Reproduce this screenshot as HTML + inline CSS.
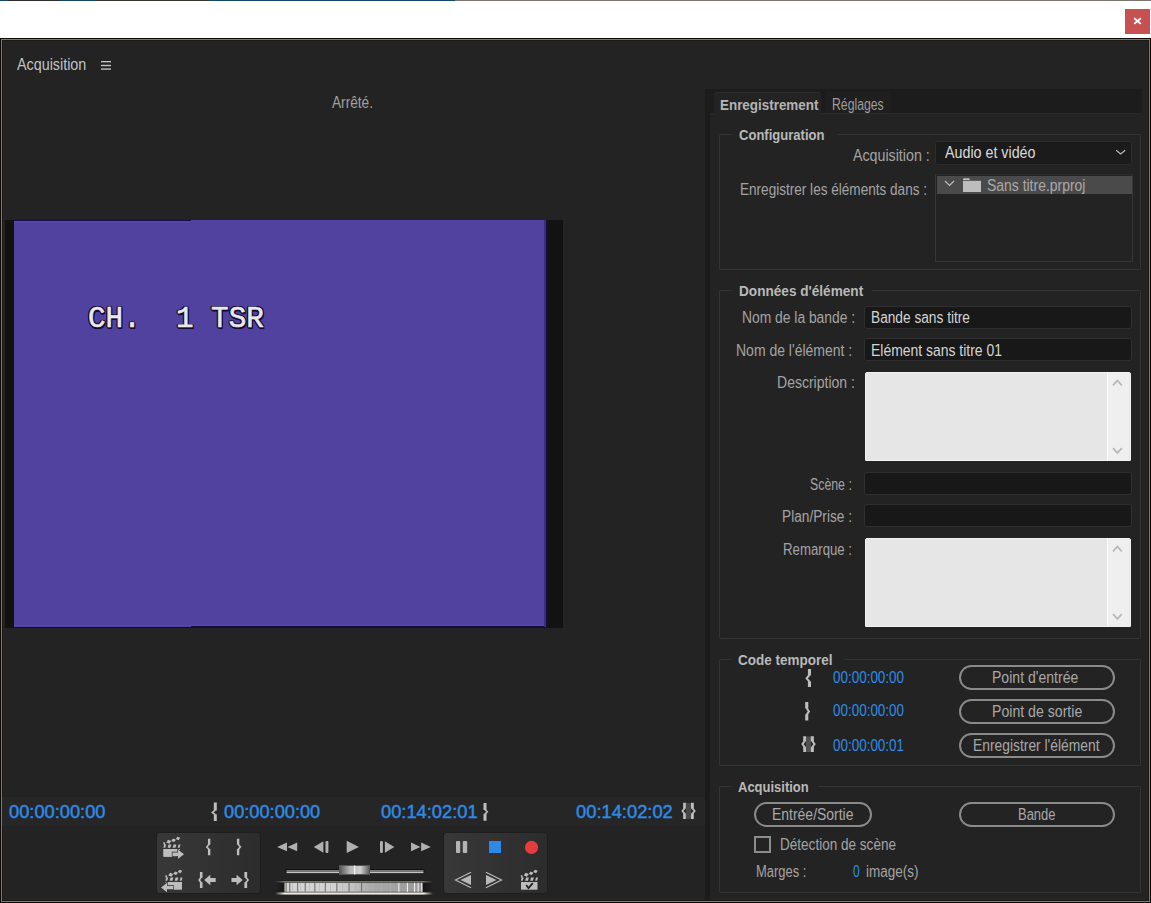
<!DOCTYPE html>
<html><head><meta charset="utf-8"><style>
html,body{margin:0;padding:0;width:1151px;height:903px;overflow:hidden;background:#fff;position:relative}
.b{position:absolute;display:block}
.t{position:absolute;white-space:nowrap;line-height:20px;font-family:"Liberation Sans",sans-serif;transform-origin:0 0}
</style></head><body>
<div class="b" style="left:0px;top:0px;width:455px;height:1px;background:#12486a"></div><div class="b" style="left:8px;top:0px;width:52px;height:1px;background:#2c2e2c"></div><div class="b" style="left:96px;top:0px;width:114px;height:1px;background:#383630"></div><div class="b" style="left:455px;top:0px;width:696px;height:1px;background:#7a746e"></div><div class="b" style="left:1125px;top:9px;width:25px;height:25px;background:#c75050"></div><svg class="b" style="left:1125px;top:9px" width="25" height="25"><path d="M9.2 9.3L15.8 14.9M15.8 9.3L9.2 14.9" stroke="#fff" stroke-width="1.9"/></svg><div class="b" style="left:0px;top:38px;width:1151px;height:865px;background:#0d0b08"></div><div class="b" style="left:1px;top:39px;width:1149px;height:863px;background:#2d8ae6"></div><div class="b" style="left:2px;top:40px;width:1147px;height:861px;background:#1e1b17"></div><div class="b" style="left:3px;top:41px;width:1145px;height:859px;background:#232323"></div><div class="t" style="left:17.20px;top:55px;font-size:16px;color:#c2c2c2;transform:scaleX(0.8953);">Acquisition</div><svg class="b" style="left:100px;top:58px" width="12" height="14"><rect x="1" y="3" width="10" height="1.35" fill="#c4c4c4"/><rect x="1" y="6.8" width="10" height="1.4" fill="#c4c4c4"/><rect x="1" y="10.2" width="10" height="1.8" fill="#9c9c9c"/></svg><div class="t" style="left:332.00px;top:93px;font-size:16px;color:#a0a0a0;transform:scaleX(0.8542);">Arrêté.</div><div class="b" style="left:5px;top:220px;width:558px;height:408px;background:#121210"></div><div class="b" style="left:14px;top:220px;width:530px;height:407px;background:#5242a0"></div><div class="b" style="left:14px;top:220px;width:177px;height:1px;background:#150a50"></div><div class="b" style="left:14px;top:221px;width:177px;height:1px;background:#5a4e96"></div><div class="b" style="left:14px;top:625px;width:177px;height:1px;background:#564e8e"></div><div class="b" style="left:191px;top:625px;width:353px;height:1px;background:#5c5a6a"></div><div class="b" style="left:191px;top:626px;width:353px;height:1px;background:#140c40"></div><div class="b" style="left:544px;top:220px;width:2px;height:407px;background:#3a2f7c"></div><div class="b" style="left:546px;top:220px;width:2px;height:407px;background:#160f3a"></div><div class="t" style="left:88px;top:305px;font-family:'Liberation Mono';font-size:29.3px;line-height:29px;color:#e8e8e8;-webkit-text-stroke:0.6px #e8e8e8;text-shadow:1.5px 0px 0 #120a34,-1.5px 0px 0 #120a34,0px 1.5px 0 #120a34,0px -1.5px 0 #120a34,1.2px 1.2px 0 #120a34,-1.2px -1.2px 0 #120a34,1.2px -1.2px 0 #120a34,-1.2px 1.2px 0 #120a34,1.5px 2px 0 #120a34,0px 2.2px 0 #120a34;transform:scaleX(1.0);transform-origin:0 0;white-space:pre">CH.  1 TSR</div><div class="b" style="left:2px;top:797px;width:703px;height:29px;background:#262626"></div><div class="t" style="left:8.60px;top:802px;font-size:18px;color:#2e8ce6;transform:scaleX(1.0147);-webkit-text-stroke:0.45px #2e8ce6;">00:00:00:00</div><div class="t" style="left:224.00px;top:802px;font-size:18px;color:#2e8ce6;transform:scaleX(1.0116);-webkit-text-stroke:0.45px #2e8ce6;">00:00:00:00</div><div class="t" style="left:381.30px;top:802px;font-size:18px;color:#2e8ce6;transform:scaleX(1.0158);-webkit-text-stroke:0.45px #2e8ce6;">00:14:02:01</div><div class="t" style="left:576.00px;top:802px;font-size:18px;color:#2e8ce6;transform:scaleX(1.0179);-webkit-text-stroke:0.45px #2e8ce6;">00:14:02:02</div><div class="b" style="left:705px;top:89px;width:437px;height:24px;background:#1c1c1c"></div><div class="b" style="left:709px;top:113px;width:5px;height:1px;background:#2a2a2a"></div><div class="b" style="left:821px;top:113px;width:320px;height:1px;background:#2a2a2a"></div><div class="b" style="left:705px;top:113px;width:5px;height:787px;background:#1c1c1c"></div><div class="b" style="left:714px;top:92px;width:107px;height:21px;background:#232323;border-radius:3px 3px 0 0;box-shadow:inset 0 1px 0 #2c2c2c"></div><div class="b" style="left:825px;top:92px;width:66px;height:21px;background:#1f1f1f;border-radius:3px 3px 0 0"></div><div class="t" style="left:719.60px;top:95px;font-size:15px;font-weight:bold;color:#b4b4b4;transform:scaleX(0.8941);">Enregistrement</div><div class="t" style="left:831.70px;top:95px;font-size:16px;color:#9c9c9c;transform:scaleX(0.7648);">Réglages</div><div class="b" style="left:719px;top:134px;width:422px;height:136px;border:1px solid #343434;border-radius:2px;box-sizing:border-box"></div><div class="b" style="left:732px;top:133px;width:105px;height:3px;background:#232323"></div><div class="t" style="left:738.60px;top:125px;font-size:15px;font-weight:bold;color:#b9b9b9;transform:scaleX(0.8698);">Configuration</div><div class="b" style="left:719px;top:290px;width:422px;height:349px;border:1px solid #343434;border-radius:2px;box-sizing:border-box"></div><div class="b" style="left:732px;top:289px;width:140px;height:3px;background:#232323"></div><div class="t" style="left:738.70px;top:281px;font-size:15px;font-weight:bold;color:#b9b9b9;transform:scaleX(0.9069);">Données d'élément</div><div class="b" style="left:719px;top:659px;width:422px;height:107px;border:1px solid #343434;border-radius:2px;box-sizing:border-box"></div><div class="b" style="left:732px;top:658px;width:112px;height:3px;background:#232323"></div><div class="t" style="left:738.40px;top:650px;font-size:15px;font-weight:bold;color:#b9b9b9;transform:scaleX(0.8990);">Code temporel</div><div class="b" style="left:719px;top:786px;width:422px;height:107px;border:1px solid #343434;border-radius:2px;box-sizing:border-box"></div><div class="b" style="left:732px;top:785px;width:86px;height:3px;background:#232323"></div><div class="t" style="left:738.40px;top:777px;font-size:15px;font-weight:bold;color:#b9b9b9;transform:scaleX(0.8659);">Acquisition</div><div class="t" style="left:853.30px;top:146px;font-size:16px;color:#a3a3a3;transform:scaleX(0.8893);">Acquisition :</div><div class="t" style="left:740.00px;top:180px;font-size:16px;color:#a3a3a3;transform:scaleX(0.8479);">Enregistrer les éléments dans :</div><div class="b" style="left:935px;top:141px;width:197px;height:24px;background:#1b1b1b;border:1px solid #2c2c2c;border-radius:3px;box-sizing:border-box"></div><div class="t" style="left:945.00px;top:143px;font-size:16px;color:#dadada;transform:scaleX(0.8925);">Audio et vidéo</div><svg class="b" style="left:1114px;top:148px" width="14" height="9"><path d="M2.2 2.2L6.6 6L11.2 2.2" stroke="#bcbcbc" stroke-width="1.15" fill="none"/></svg><div class="b" style="left:935px;top:174px;width:198px;height:88px;background:#232323;border:1px solid #363636;border-top-color:#2a2a2a;box-sizing:border-box"></div><div class="b" style="left:937px;top:176px;width:195px;height:18px;background:#4a4a4a"></div><svg class="b" style="left:943px;top:178px" width="14" height="10"><path d="M2 3L6.5 7.5L11 3" stroke="#bdbdbd" stroke-width="1.2" fill="none"/></svg><svg class="b" style="left:962px;top:177px" width="20" height="16"><rect x="1" y="3.8" width="18" height="11.2" fill="#bdbdbd"/><path d="M1 3V2.2Q1 1.2 2 1.2H6.8Q7.8 1.2 7.8 2.2V3z" fill="#bdbdbd"/></svg><div class="t" style="left:987.00px;top:176px;font-size:16px;color:#a9a9a9;transform:scaleX(0.8712);">Sans titre.prproj</div><div class="t" style="left:741.50px;top:308px;font-size:16px;color:#a3a3a3;transform:scaleX(0.8650);">Nom de la bande :</div><div class="b" style="left:864px;top:306px;width:268px;height:23px;background:#181818;border:1px solid #2f2f2f;border-radius:3px;box-sizing:border-box"></div><div class="t" style="left:871.40px;top:308px;font-size:16px;color:#d4d4d4;transform:scaleX(0.8560);">Bande sans titre</div><div class="t" style="left:735.60px;top:341px;font-size:16px;color:#a3a3a3;transform:scaleX(0.8743);">Nom de l'élément :</div><div class="b" style="left:864px;top:338px;width:268px;height:23px;background:#181818;border:1px solid #2f2f2f;border-radius:3px;box-sizing:border-box"></div><div class="t" style="left:871.40px;top:341px;font-size:16px;color:#d4d4d4;transform:scaleX(0.8716);">Elément sans titre 01</div><div class="t" style="left:776.70px;top:373px;font-size:16px;color:#a3a3a3;transform:scaleX(0.8763);">Description :</div><div class="b" style="left:865px;top:372px;width:266px;height:89px;background:#e6e6e6;border:1px solid #f2f2f2;border-radius:2px 2px 1px 1px;box-sizing:border-box"></div><div class="b" style="left:1107px;top:372px;width:1px;height:89px;background:#fbfbfb"></div><div class="b" style="left:1108px;top:373px;width:21px;height:87px;background:#efefef"></div><div class="b" style="left:1129px;top:373px;width:1px;height:87px;background:#e7e7e7"></div><svg class="b" style="left:1105px;top:372px" width="26" height="89"><path d="M8 13.3L12.4 8.6L16.8 13.3" stroke="#b8b8b8" stroke-width="1.7" fill="none"/><path d="M8 76.1L12.4 80.9L16.8 76.1" stroke="#b8b8b8" stroke-width="1.7" fill="none"/></svg><div class="t" style="left:810.10px;top:475px;font-size:16px;color:#a3a3a3;transform:scaleX(0.7705);">Scène :</div><div class="b" style="left:864px;top:472px;width:268px;height:23px;background:#181818;border:1px solid #2f2f2f;border-radius:3px;box-sizing:border-box"></div><div class="t" style="left:781.60px;top:507px;font-size:16px;color:#a3a3a3;transform:scaleX(0.8557);">Plan/Prise :</div><div class="b" style="left:864px;top:504px;width:268px;height:23px;background:#181818;border:1px solid #2f2f2f;border-radius:3px;box-sizing:border-box"></div><div class="t" style="left:782.60px;top:540px;font-size:16px;color:#a3a3a3;transform:scaleX(0.8254);">Remarque :</div><div class="b" style="left:865px;top:538px;width:266px;height:89px;background:#e6e6e6;border:1px solid #f2f2f2;border-radius:2px 2px 1px 1px;box-sizing:border-box"></div><div class="b" style="left:1107px;top:538px;width:1px;height:89px;background:#fbfbfb"></div><div class="b" style="left:1108px;top:539px;width:21px;height:87px;background:#efefef"></div><div class="b" style="left:1129px;top:539px;width:1px;height:87px;background:#e7e7e7"></div><svg class="b" style="left:1105px;top:538px" width="26" height="89"><path d="M8 13.3L12.4 8.6L16.8 13.3" stroke="#b8b8b8" stroke-width="1.7" fill="none"/><path d="M8 76.1L12.4 80.9L16.8 76.1" stroke="#b8b8b8" stroke-width="1.7" fill="none"/></svg><div class="t" style="left:832.80px;top:668px;font-size:16px;color:#2e8ce6;transform:scaleX(0.8402);">00:00:00:00</div><div class="t" style="left:832.80px;top:701px;font-size:16px;color:#2e8ce6;transform:scaleX(0.8402);">00:00:00:00</div><div class="t" style="left:832.80px;top:735.5px;font-size:16px;color:#2e8ce6;transform:scaleX(0.8402);">00:00:00:01</div><div class="b" style="left:959px;top:665px;width:156px;height:25px;border:2px solid #8a8a8a;border-radius:13px;box-sizing:border-box"></div><div class="t" style="left:992.40px;top:667.5px;font-size:16px;color:#a8a8a8;transform:scaleX(0.8784);">Point d'entrée</div><div class="b" style="left:959px;top:699px;width:156px;height:25px;border:2px solid #8a8a8a;border-radius:13px;box-sizing:border-box"></div><div class="t" style="left:991.50px;top:701.5px;font-size:16px;color:#a8a8a8;transform:scaleX(0.8827);">Point de sortie</div><div class="b" style="left:959px;top:733px;width:156px;height:25px;border:2px solid #8a8a8a;border-radius:13px;box-sizing:border-box"></div><div class="t" style="left:972.90px;top:736px;font-size:16px;color:#a8a8a8;transform:scaleX(0.8650);">Enregistrer l'élément</div><div class="b" style="left:754px;top:802px;width:118px;height:25px;border:2px solid #8a8a8a;border-radius:13px;box-sizing:border-box"></div><div class="t" style="left:771.60px;top:805px;font-size:16px;color:#a8a8a8;transform:scaleX(0.8726);">Entrée/Sortie</div><div class="b" style="left:959px;top:802px;width:156px;height:25px;border:2px solid #8a8a8a;border-radius:13px;box-sizing:border-box"></div><div class="t" style="left:1017.60px;top:805px;font-size:16px;color:#a8a8a8;transform:scaleX(0.8108);">Bande</div><div class="b" style="left:754px;top:836px;width:17px;height:17px;border:2px solid #8c8c8c;box-sizing:border-box"></div><div class="t" style="left:780.40px;top:834.5px;font-size:16px;color:#a3a3a3;transform:scaleX(0.8467);">Détection de scène</div><div class="t" style="left:755.60px;top:862px;font-size:16px;color:#a3a3a3;transform:scaleX(0.8096);">Marges :</div><div class="t" style="left:852.50px;top:862px;font-size:16px;color:#2e8ce6;transform:scaleX(0.7528);">0</div><div class="t" style="left:866.40px;top:862px;font-size:16px;color:#a3a3a3;transform:scaleX(0.8450);">image(s)</div><div class="b" style="left:157px;top:833px;width:103px;height:60px;background:linear-gradient(90deg,#383838,#2c2c2c);border-radius:3px;box-shadow:0 0 0 1px #1e1e1e"></div><div class="b" style="left:444px;top:833px;width:103px;height:60px;background:linear-gradient(90deg,#383838,#2c2c2c);border-radius:3px;box-shadow:0 0 0 1px #1e1e1e"></div><svg class="b" style="left:0;top:0" width="1151" height="903" viewBox="0 0 1151 903"><polygon points="163.20,842.60 164.40,841.90 165.60,844.60 163.80,845.00" fill="#bdbdbd"/><polygon points="166.25,842.41 168.12,839.85 171.25,841.09 169.38,843.65" fill="#bdbdbd"/><polygon points="171.20,840.93 173.00,838.50 176.00,839.67 174.20,842.10" fill="#bdbdbd"/><polygon points="175.80,839.08 177.45,836.65 180.20,837.82 178.55,840.25" fill="#bdbdbd"/><polygon points="164.30,844.60 166.20,844.60 165.20,847.80 163.30,847.80" fill="#bdbdbd"/><polygon points="168.60,844.60 171.40,844.60 170.40,847.80 167.60,847.80" fill="#bdbdbd"/><polygon points="173.60,844.60 176.40,844.60 175.40,847.80 172.60,847.80" fill="#bdbdbd"/><polygon points="178.60,844.60 180.50,844.60 179.50,847.80 177.60,847.80" fill="#bdbdbd"/><rect x="163.5" y="849" width="16.5" height="7.7" fill="#bdbdbd"/><rect x="163.5" y="849" width="16.5" height="7.7" fill="#bdbdbd"/><path d="M172.5,852.5 H178 V849.5 L184,854.3 L178,859.0999999999999 V856.0999999999999 H172.5 Z" fill="#bdbdbd" stroke="#303030" stroke-width="1.3" paint-order="stroke"/><polygon points="165.20,875.60 166.40,874.90 167.60,877.60 165.80,878.00" fill="#bdbdbd"/><polygon points="168.25,875.41 170.12,872.85 173.25,874.09 171.38,876.65" fill="#bdbdbd"/><polygon points="173.20,873.93 175.00,871.50 178.00,872.67 176.20,875.10" fill="#bdbdbd"/><polygon points="177.80,872.08 179.45,869.65 182.20,870.82 180.55,873.25" fill="#bdbdbd"/><polygon points="166.30,877.60 168.20,877.60 167.20,880.80 165.30,880.80" fill="#bdbdbd"/><polygon points="170.60,877.60 173.40,877.60 172.40,880.80 169.60,880.80" fill="#bdbdbd"/><polygon points="175.60,877.60 178.40,877.60 177.40,880.80 174.60,880.80" fill="#bdbdbd"/><polygon points="180.60,877.60 182.50,877.60 181.50,880.80 179.60,880.80" fill="#bdbdbd"/><rect x="165.5" y="882" width="16.5" height="7.7" fill="#bdbdbd"/><path d="M173,885.7 H167 V882.7 L161,887.5 L167,892.3 V889.3 H173 Z" fill="#bdbdbd" stroke="#303030" stroke-width="1.3" paint-order="stroke"/><path d="M209.15,838.8 V844.70 M209.15,849.10 V855.2" stroke="#bdbdbd" stroke-width="2.4" fill="none"/><path d="M209.15,844.30 L206.77,846.90 L209.15,849.50" stroke="#bdbdbd" stroke-width="1.6" fill="none" stroke-linejoin="miter"/><path d="M238.10,838.8 V844.70 M238.10,849.10 V855.2" stroke="#bdbdbd" stroke-width="2.4" fill="none"/><path d="M238.10,844.30 L240.38,846.90 L238.10,849.50" stroke="#bdbdbd" stroke-width="1.6" fill="none" stroke-linejoin="miter"/><path d="M201.20,871.9 V877.70 M201.20,882.30 V888" stroke="#bdbdbd" stroke-width="2.6" fill="none"/><path d="M201.20,877.30 L199.19,880.00 L201.20,882.70" stroke="#bdbdbd" stroke-width="1.7" fill="none" stroke-linejoin="miter"/><path d="M215.7,878.05 H210.29999999999998 V874.85 L204.2,880 L210.29999999999998,885.15 V881.95 H215.7 Z" fill="#bdbdbd"/><path d="M245.75,871.9 V877.70 M245.75,882.30 V888" stroke="#bdbdbd" stroke-width="2.8" fill="none"/><path d="M245.75,877.30 L248.01,880.00 L245.75,882.70" stroke="#bdbdbd" stroke-width="1.7" fill="none" stroke-linejoin="miter"/><path d="M231.5,878.05 H236.6 V874.85 L242.7,880 L236.6,885.15 V881.95 H231.5 Z" fill="#bdbdbd"/><polygon points="277.1,847 287,842.6 287,851.3" fill="#b0b0b0"/><polygon points="287.5,847 297.2,842.6 297.2,851.3" fill="#b0b0b0"/><polygon points="313.8,847 323.4,841.3 323.4,852.8" fill="#b0b0b0"/><rect x="325.5" y="841" width="2.9" height="12" rx="1.2" fill="#b0b0b0"/><polygon points="346.7,840.8 358.9,847 346.7,853" fill="#b0b0b0"/><rect x="380" y="841" width="2.9" height="12" rx="1.2" fill="#b0b0b0"/><polygon points="384.9,841.2 394.3,847 384.9,852.8" fill="#b0b0b0"/><polygon points="411,842.6 420.5,847 411,851.3" fill="#b0b0b0"/><polygon points="421.1,842.6 430.8,847 421.1,851.3" fill="#b0b0b0"/><rect x="285.5" y="869" width="139" height="5" rx="2" fill="#111"/><rect x="286.5" y="870" width="137" height="1.8" fill="#7a7a7a"/><rect x="286.5" y="871.8" width="137" height="1.4" fill="#c4c4c4"/><defs><linearGradient id="th" x1="0" x2="1"><stop offset="0" stop-color="#5a5a5a"/><stop offset="0.35" stop-color="#b8b8b8"/><stop offset="0.7" stop-color="#d0d0d0"/><stop offset="1" stop-color="#606060"/></linearGradient><linearGradient id="jogfade" x1="0" x2="1"><stop offset="0" stop-color="#232323"/><stop offset="0.06" stop-color="#232323" stop-opacity="0"/><stop offset="0.94" stop-color="#232323" stop-opacity="0"/><stop offset="1" stop-color="#232323"/></linearGradient></defs><rect x="339" y="865" width="31" height="10" fill="#555"/><rect x="340" y="866" width="29" height="8" fill="url(#th)"/><rect x="354" y="865.5" width="1.2" height="9" fill="#f4f4f4"/><defs><linearGradient id="jogband" x1="0" x2="1"><stop offset="0" stop-color="#d6d6d6"/><stop offset="0.35" stop-color="#d2d2d2"/><stop offset="0.5" stop-color="#c2c2c2"/><stop offset="0.62" stop-color="#aaaaaa"/><stop offset="1" stop-color="#9a9a9a"/></linearGradient></defs><rect x="275" y="880.6" width="158" height="14.4" fill="#161616"/><rect x="275" y="881.2" width="158" height="1.2" fill="#8c887c"/><rect x="284.5" y="882.8" width="138" height="9" fill="url(#jogband)"/><rect x="285.6" y="882.8" width="1.1" height="9" fill="#707070"/><rect x="289.2" y="882.8" width="1.1" height="9" fill="#707070"/><rect x="297.1" y="882.8" width="1.1" height="9" fill="#707070"/><rect x="304.7" y="882.8" width="1.1" height="9" fill="#707070"/><rect x="314.3" y="882.8" width="1.1" height="9" fill="#707070"/><rect x="324.8" y="882.8" width="1.1" height="9" fill="#707070"/><rect x="336.3" y="882.8" width="1.1" height="9" fill="#707070"/><rect x="348.5" y="882.8" width="1.1" height="9" fill="#707070"/><rect x="361" y="882.8" width="1.1" height="9" fill="#707070"/><rect x="292" y="882.8" width="1" height="9" fill="#b0b0b0" opacity="0.6"/><rect x="300" y="882.8" width="1" height="9" fill="#b0b0b0" opacity="0.6"/><rect x="309" y="882.8" width="1" height="9" fill="#b0b0b0" opacity="0.6"/><rect x="319" y="882.8" width="1" height="9" fill="#b0b0b0" opacity="0.6"/><rect x="330" y="882.8" width="1" height="9" fill="#b0b0b0" opacity="0.6"/><rect x="342" y="882.8" width="1" height="9" fill="#b0b0b0" opacity="0.6"/><rect x="355" y="882.8" width="1" height="9" fill="#b0b0b0" opacity="0.6"/><rect x="372" y="882.8" width="1" height="9" fill="#b0b0b0" opacity="0.6"/><rect x="381" y="882.8" width="1" height="9" fill="#b0b0b0" opacity="0.6"/><rect x="390" y="882.8" width="1" height="9" fill="#b0b0b0" opacity="0.6"/><rect x="398.3" y="882.8" width="1.1" height="9" fill="#eeeeee"/><rect x="406.9" y="882.8" width="1.1" height="9" fill="#eeeeee"/><rect x="414" y="882.8" width="1.1" height="9" fill="#eeeeee"/><rect x="417.6" y="882.8" width="1.1" height="9" fill="#eeeeee"/><rect x="421.2" y="882.8" width="1.1" height="9" fill="#eeeeee"/><rect x="275" y="892.4" width="158" height="2.2" fill="#efebdf"/><rect x="275" y="880" width="158" height="15.5" fill="url(#jogfade)"/><rect x="456" y="841" width="4.2" height="12" rx="1" fill="#b4b4b4"/><rect x="462.8" y="841" width="4.4" height="12" rx="1" fill="#b4b4b4"/><rect x="489" y="841" width="12" height="12" fill="#2d88e8"/><circle cx="531.5" cy="847.4" r="6.6" fill="#e83c3c"/><polyline points="471,872.3 455.5,880 471,887.7" fill="none" stroke="#b8b8b8" stroke-width="1.2"/><polygon points="471,875 460.5,880 471,885" fill="#b8b8b8"/><polyline points="486,872.3 501.5,880 486,887.7" fill="none" stroke="#b8b8b8" stroke-width="1.2"/><polygon points="486,875 496.5,880 486,885" fill="#b8b8b8"/><polygon points="520.70,875.60 521.90,874.90 523.10,877.60 521.30,878.00" fill="#bdbdbd"/><polygon points="523.75,875.41 525.62,872.85 528.75,874.09 526.88,876.65" fill="#bdbdbd"/><polygon points="528.70,873.93 530.50,871.50 533.50,872.67 531.70,875.10" fill="#bdbdbd"/><polygon points="533.30,872.08 534.95,869.65 537.70,870.82 536.05,873.25" fill="#bdbdbd"/><polygon points="521.80,877.60 523.70,877.60 522.70,880.80 520.80,880.80" fill="#bdbdbd"/><polygon points="526.10,877.60 528.90,877.60 527.90,880.80 525.10,880.80" fill="#bdbdbd"/><polygon points="531.10,877.60 533.90,877.60 532.90,880.80 530.10,880.80" fill="#bdbdbd"/><polygon points="536.10,877.60 538.00,877.60 537.00,880.80 535.10,880.80" fill="#bdbdbd"/><rect x="521.0" y="882" width="16.5" height="7.7" fill="#bdbdbd"/><path d="M526.2 885 L528.5 888 L532.8 883.2" stroke="#222" stroke-width="1.8" fill="none"/><path d="M809.45,669 V675.40 M809.45,681.20 V687" stroke="#bdbdbd" stroke-width="3.1" fill="none"/><path d="M809.45,675.00 L806.60,678.30 L809.45,681.60" stroke="#bdbdbd" stroke-width="2.0" fill="none" stroke-linejoin="miter"/><path d="M806.75,702 V708.60 M806.75,714.20 V720.6" stroke="#bdbdbd" stroke-width="3.1" fill="none"/><path d="M806.75,708.20 L808.90,711.40 L806.75,714.60" stroke="#bdbdbd" stroke-width="2.0" fill="none" stroke-linejoin="miter"/><rect x="805.8" y="736.5" width="5.2" height="15.5" fill="#505050"/><path d="M804.60,736.2 V741.50 M804.60,746.70 V752" stroke="#bdbdbd" stroke-width="2.8" fill="none"/><path d="M804.60,741.10 L802.43,744.10 L804.60,747.10" stroke="#bdbdbd" stroke-width="1.9" fill="none" stroke-linejoin="miter"/><path d="M812.35,736.2 V741.50 M812.35,746.70 V752" stroke="#bdbdbd" stroke-width="3.0" fill="none"/><path d="M812.35,741.10 L814.57,744.10 L812.35,747.10" stroke="#bdbdbd" stroke-width="1.9" fill="none" stroke-linejoin="miter"/><path d="M215.30,802.6 V810.50 M215.30,814.30 V821" stroke="#bdbdbd" stroke-width="3.0" fill="none"/><path d="M215.30,810.10 L212.32,812.40 L215.30,814.70" stroke="#bdbdbd" stroke-width="1.6" fill="none" stroke-linejoin="miter"/><path d="M485.00,802.9 V809.90 M485.00,813.70 V820.8" stroke="#bdbdbd" stroke-width="3.0" fill="none"/><path d="M485.00,809.50 L487.28,811.80 L485.00,814.10" stroke="#bdbdbd" stroke-width="1.6" fill="none" stroke-linejoin="miter"/><rect x="685.8" y="803" width="5.4" height="16" fill="#474747"/><path d="M684.50,802.7 V808.80 M684.50,813.20 V819" stroke="#bdbdbd" stroke-width="2.7" fill="none"/><path d="M684.50,808.40 L682.39,811.00 L684.50,813.60" stroke="#bdbdbd" stroke-width="1.7" fill="none" stroke-linejoin="miter"/><path d="M692.40,802.7 V808.80 M692.40,813.20 V819" stroke="#bdbdbd" stroke-width="2.8" fill="none"/><path d="M692.40,808.40 L694.71,811.00 L692.40,813.60" stroke="#bdbdbd" stroke-width="1.7" fill="none" stroke-linejoin="miter"/></svg>
</body></html>
